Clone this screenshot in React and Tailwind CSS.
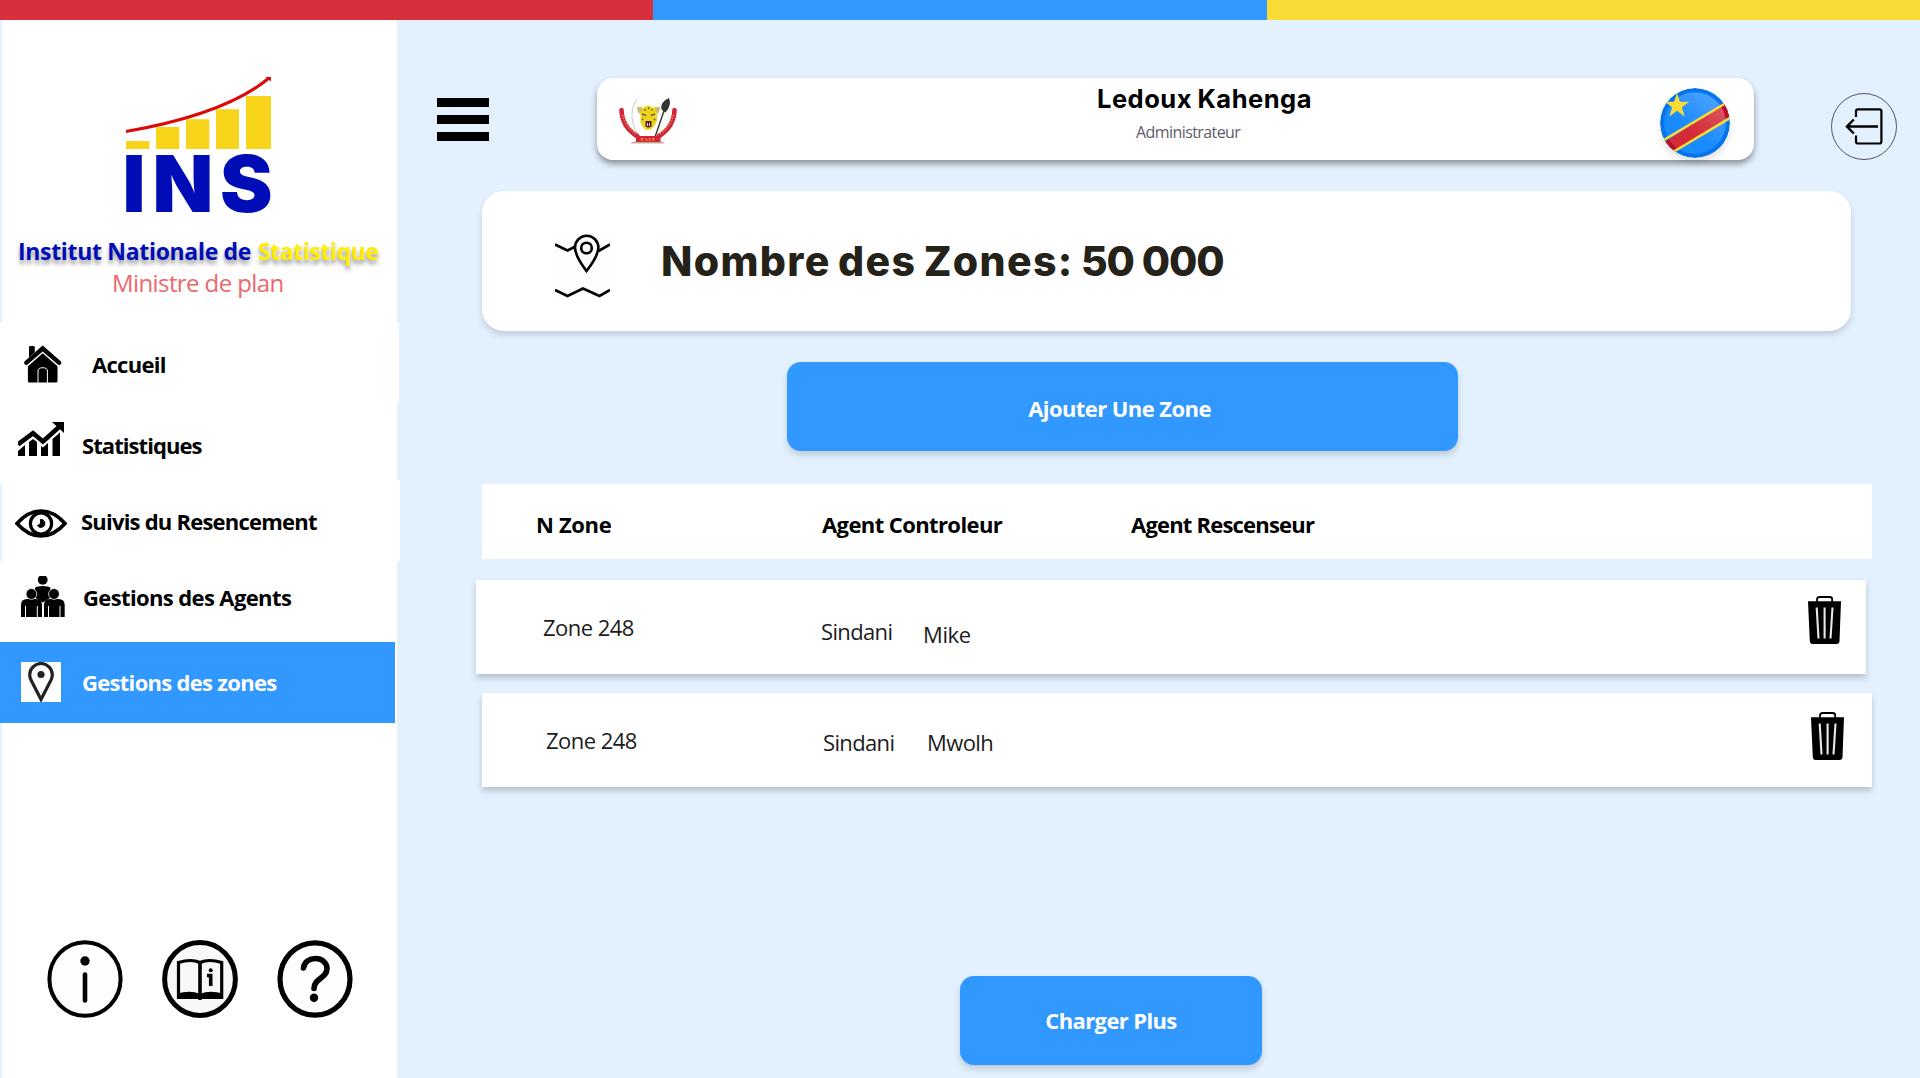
import React from "react";

const HomeIcon = () => (
  <svg viewBox="0 0 38 38" className="h-[38px] w-[38px]">
    <path d="M5 2.2Q5 1 6.200 1H9.600Q10.800 1 10.800 2.200V9.500L5 14.500Z" fill="#000" />
    <path d="M3.900 17.300V36Q3.900 37.500 5.400 37.500H32Q33.500 37.500 33.500 36V17.300L18.700 4.500Z" fill="#000" />
    <path d="M2 19L18.700 4.300L35.500 19" fill="none" stroke="#fff" strokeWidth="6" />
    <path d="M2.400 17.700L18.700 3.500L35 17.700" fill="none" stroke="#000" strokeWidth="4.400" strokeLinecap="round" />
    <path d="M14 38V26Q14 22.700 18.700 22.700Q23.400 22.700 23.400 26V38" fill="none" stroke="#fff" strokeWidth="1" />
  </svg>
);

const ChartIcon = () => (
  <svg viewBox="0 0 46 34" className="h-[34px] w-[46px]">
    <path d="M0 29L7 23V34H0ZM11 20L15 17L19 20V34H11ZM23 24L25 25.500L30 21V34H23ZM34.500 17L42 10.500V34H34.500Z" fill="#000" />
    <path d="M0 22.500L15 11.200L25 19.500L41 5" fill="none" stroke="#000" strokeWidth="4.600" />
    <path d="M34 0H46V11Z" fill="#000" />
  </svg>
);

const EyeIcon = () => (
  <svg viewBox="0 0 52 29" className="h-[29px] w-[52px]" fill="none" stroke="#000">
    <path d="M2 14.500Q13 2 26 2T50 14.500Q39 27 26 27T2 14.500Z" strokeWidth="3.600" />
    <circle cx="26" cy="14.500" r="10.600" strokeWidth="3.200" />
    <path d="M25.300 10.500A4 4 0 1 1 22.500 16.500Q26.500 15.500 25.300 10.500Z" fill="#000" strokeWidth="1" />
  </svg>
);

const AgentsIcon = () => (
  <svg viewBox="0 0 44 41" className="h-[41px] w-[44px]">
    <circle cx="21.700" cy="3.800" r="4.900" />
    <path d="M14 11.800Q16 10 21.700 10T29.500 11.800L29 22L21.700 26.500L14.500 22Z" fill="#000" />
    <path d="M0 41V29Q0 23 6 23H15Q21 23 21 29V41ZM23 41V29Q23 23 29 23H37.500Q43.700 23 43.700 29V41Z" fill="#000" />
    <circle cx="10.400" cy="18" r="5.400" stroke="#fff" strokeWidth="0.700" />
    <circle cx="33" cy="18" r="5.400" stroke="#fff" strokeWidth="0.700" />
    <path d="M4.500 30V41M16.300 30V41M27.500 30V41M39 30V41" stroke="#fff" strokeWidth="1" />
  </svg>
);

const PinIcon = () => (
  <svg viewBox="0 0 40 40" className="h-10 w-10 bg-white">
    <path d="M20 37.500L10 18Q8.700 15.500 8.700 12.800A11.300 11.300 0 0 1 31.300 12.800Q31.300 15.500 30 18Z" fill="none" stroke="#222" strokeWidth="3.200" />
    <circle cx="20" cy="12.500" r="3.600" fill="#222" />
  </svg>
);

const MapIcon = () => (
  <svg viewBox="0 0 55 64" className="h-16 w-[55px] bg-[#fdfdfd]" fill="none" stroke="#000" strokeWidth="2.600">
    <path d="M0 10.500L12.500 16.500L19.500 13M43.500 17L55 10.500M0 56L12.500 62L28 54.500L44.500 62L55 56" />
    <path d="M31.500 37C27 31 20 22 20 13.500A11.700 11.700 0 0 1 43.400 13.500C43.400 22 36 31 31.500 37Z" />
    <circle cx="31.500" cy="14" r="5.300" />
  </svg>
);

const TrashIcon = () => (
  <svg viewBox="0 0 33 48" className="h-12 w-[33px]">
    <path d="M9 6V3.500Q9 1 11.500 1H21.700Q24.200 1 24.200 3.500V6" fill="none" stroke="#000" strokeWidth="1.800" />
    <path d="M0 5.300H33L31.500 45Q31.300 48 28.500 48H4.500Q2 48 1.800 45Z" fill="#000" />
    <path d="M8.700 11.500L10.500 42.500M16.600 11.500V42.500M24.500 11.500L22.500 42.500" stroke="#e8e8e8" strokeWidth="2.100" />
  </svg>
);

const InfoIcon = () => (
  <svg viewBox="0 0 76 78" className="h-[78px] w-[76px]">
    <ellipse cx="38" cy="39" rx="35.600" ry="36.800" fill="#fdfdfd" stroke="#000" strokeWidth="4" />
    <circle cx="38" cy="21" r="4.700" />
    <path d="M38 34.500V60.500" stroke="#000" strokeWidth="4.600" strokeLinecap="round" />
  </svg>
);

const BookIcon = () => (
  <svg viewBox="0 0 76 78" className="h-[78px] w-[76px]">
    <ellipse cx="38" cy="39" rx="35.400" ry="36.500" fill="#f8f8f8" stroke="#000" strokeWidth="5" />
    <path d="M16.500 22.500Q29 18.500 38 22.500Q47 18.500 59.700 22.500V57.500H16.500Z" fill="#f8f8f8" stroke="#000" strokeWidth="3.200" />
    <path d="M15 53.500Q29 50 38 54Q47 50 61 53.500V58.500H41Q38 61.500 35 58.500H15Z" />
    <path d="M38 22V56" stroke="#000" strokeWidth="3.600" />
    <circle cx="48.700" cy="30.300" r="2" />
    <path d="M45 35.500H48.700V46" fill="none" stroke="#000" strokeWidth="3.600" />
  </svg>
);

const HelpIcon = () => (
  <svg viewBox="0 0 76 78" className="h-[78px] w-[76px]">
    <ellipse cx="38" cy="39" rx="35" ry="36.200" fill="#fdfdfd" stroke="#000" strokeWidth="5.200" />
    <path d="M26.500 28C28 15 49.500 15.500 50 28.500C50 38.500 37 38 37 48.500" fill="none" stroke="#000" strokeWidth="5.600" strokeLinecap="round" />
    <circle cx="37" cy="57.700" r="4.200" />
  </svg>
);

const LogoutIcon = () => (
  <svg viewBox="0 0 66 67" className="h-[67px] w-[66px]" fill="none" stroke="#000">
    <ellipse cx="33" cy="33.500" rx="32.500" ry="33" strokeWidth="1" stroke="#555" />
    <path d="M25 24V18Q25 16.300 27 16.300H48.500Q50.400 16.300 50.400 18.300V48.500Q50.400 50.500 48.500 50.500H27Q25 50.500 25 48.500V42.500" strokeWidth="2.200" />
    <path d="M47 33.500H16.500M22.800 26.500L16 33.500L22.800 40.500" strokeWidth="2.500" />
  </svg>
);

const InsLogo = () => (
  <svg viewBox="0 0 145 136" className="h-[136px] w-[145px] overflow-visible">
    <path d="M0 64H23.300V72H0ZM30 50H53.300V72H30ZM60 42.300H83.300V72H60ZM90 32.300H113V72H90ZM120 19H145V72H120Z" fill="#f8d51a" />
    <path d="M0 54.500Q100 37 143 1" fill="none" stroke="#dc0808" strokeWidth="3" />
    <path d="M139.500 0H145V4.500Z" fill="#dc0808" />
    <g fill="#000cb6" fontSize="79" fontWeight="900" fontFamily="Inter, sans-serif">
      <text x="-3.500" y="135">I</text>
      <text x="26.500" y="135">N</text>
      <text x="94" y="135">S</text>
    </g>
  </svg>
);

const Emblem = () => (
  <svg viewBox="0 0 58 47" className="h-[47px] w-[58px]">
    <path d="M18 2C11 12 11 26 20 39" fill="none" stroke="#bbb" strokeWidth="0.800" />
    <path d="M11 46.500Q14 43.500 20 44H38Q44 44 46 46.500Z" fill="#c9a99a" />
    <path d="M36 40L46 11" stroke="#333" strokeWidth="1.400" />
    <path d="M50 1Q53 8 46.500 15.500Q40 12 43 7Q45 3 50 1Z" fill="#333" />
    <path d="M18 10Q22 9 24 11Q29 6 34 11Q37 9 41 10Q41 15 38 17V24Q34 33 29 33T21.500 25V17Q18 15 18 10Z" fill="#ecd31c" />
    <path d="M18 10L23 12L20 17ZM41 10L36 12L39 17Z" fill="#b9b69a" />
    <path d="M23 17L27 18.500M36 17L32 18.500M26 12V13.500M29.500 10.500V12M33 12V13.500M23 22L24 23M36 22L35 23" stroke="#333" strokeWidth="1.100" />
    <path d="M26.500 24H32.500V29.500Q29.500 31.500 26.500 29.500Z" fill="#5b1830" />
    <path d="M28.500 26V29M30.500 26V29" stroke="#fff" strokeWidth="0.800" />
    <path d="M2.500 13C3 26 9 33 18.500 39.500M55.500 13C55 26 49 33 39.500 39.500" fill="none" stroke="#d3243e" strokeWidth="4.600" strokeLinecap="round" />
    <path d="M3.500 18C6 27 10 32 17 37M54.500 18C52 27 48 32 41 37" fill="none" stroke="#e8973a" strokeWidth="1.600" strokeDasharray="1.200 1.600" />
    <path d="M17 39H41.500V45H17Z" fill="#d3243e" />
    <text x="29.300" y="43.800" textAnchor="middle" fontSize="4.800" fontWeight="700" fontFamily="Liberation Serif, serif" letterSpacing="0.900" fill="#f0b030">PAIX</text>
  </svg>
);

const Flag = () => (
  <svg viewBox="0 0 70 70" className="h-[70px] w-[70px] rounded-full shadow-[0_4px_6px_rgba(0,0,0,0.12)]">
    <defs>
      <clipPath id="disc"><circle cx="35" cy="35" r="35" /></clipPath>
      <clipPath id="inner"><circle cx="35" cy="35" r="30.800" /></clipPath>
      <linearGradient id="shine" x1="0.800" y1="0.100" x2="0.400" y2="0.600">
        <stop offset="0" stopColor="#fff" stopOpacity="0.200" />
        <stop offset="1" stopColor="#fff" stopOpacity="0" />
      </linearGradient>
    </defs>
    <g clipPath="url(#disc)">
      <path d="M0 0H70V70H0Z" fill="#0475ea" />
      <path d="M0 57L70 12V28L10 67Z" fill="#c00d20" />
      <g clipPath="url(#inner)">
        <path d="M0 0H70V70H0Z" fill="#1a8aff" />
        <path d="M0 57L70 12V28L10 67Z" fill="#d52b39" />
        <circle cx="35" cy="35" r="31" fill="url(#shine)" />
      </g>
      <path d="M3 52.500L66 15M13 64L71 29.500" stroke="#fbdc34" strokeWidth="2.600" />
      <path d="M17 5L19.900 13.800H29.200L21.800 19.300L24.700 28.500L17 22.800L9.300 28.500L12.200 19.300L4.800 13.800H14.100Z" fill="#fbdc34" />
    </g>
  </svg>
);

const Bold = ({ className = "", children }) => (
  <span className={`whitespace-nowrap text-[22px] leading-[30px] font-bold ${className}`}>{children}</span>
);

const Cell = ({ className = "", children }) => (
  <span className={`shrink-0 whitespace-nowrap text-[22px] leading-[30px] text-[#1c1c1c] ${className}`}>{children}</span>
);

const actionClass =
  "flex h-[89px] items-start justify-center rounded-[14px] bg-[#3198ff] text-white shadow-[0_4px_6px_rgba(0,0,0,0.16)]";

function Sidebar() {
  return (
    <aside className="flex w-[400px] shrink-0 flex-col">
      <div className="ml-[2px] flex h-[303px] w-[395px] flex-col bg-white pt-[57px]">
        <div className="pl-[124px]"><InsLogo /></div>
        <div className="mt-[22px] flex gap-[7px] pl-4 text-[23px] leading-[32px] font-bold whitespace-nowrap [text-shadow:0_4px_4px_rgba(0,0,0,0.4)]">
          <span className="tracking-[-0.32px] text-[#000cb6]">Institut Nationale de</span>
          <span className="tracking-[-0.42px] text-[#ffee00]">Statistique</span>
        </div>
        <p className="pl-[110px] text-2xl leading-[32px] tracking-[-0.59px] text-[#ec686c]">Ministre de plan</p>
      </div>
      <nav className="flex flex-col">
        <a className="flex h-[81px] w-[399px] items-start bg-white pl-[24px]">
          <span className="mt-[22px]"><HomeIcon /></span>
          <Bold className="mt-[26px] ml-[30px] tracking-[-0.7px]">Accueil</Bold>
        </a>
        <a className="flex h-[81px] w-[397px] items-start bg-white pl-[18px]">
          <span className="mt-[18px]"><ChartIcon /></span>
          <Bold className="mt-[26px] ml-[18px] tracking-[-0.93px]">Statistiques</Bold>
        </a>
        <a className="mt-[-5px] ml-[2px] flex h-[81px] w-[398px] items-start bg-white pl-[13px]">
          <span className="mt-[29px]"><EyeIcon /></span>
          <Bold className="mt-[26px] ml-[14px] tracking-[-0.78px]">Suivis du Resencement</Bold>
        </a>
        <a className="flex h-[81px] w-[397px] items-start bg-white pl-[21px]">
          <span className="mt-[15px]"><AgentsIcon /></span>
          <Bold className="mt-[21px] ml-[18px] tracking-[-0.62px]">Gestions des Agents</Bold>
        </a>
        <div className="w-[397px] bg-white">
          <a className="flex h-[81px] w-[395px] items-start bg-[#3198ff] pl-[21px] text-white">
            <span className="mt-5"><PinIcon /></span>
            <Bold className="mt-[25px] ml-[21px] tracking-[-0.7px]">Gestions des zones</Bold>
          </a>
        </div>
      </nav>
      <div className="ml-[2px] flex w-[395px] grow items-start gap-[39px] bg-white pt-[217px] pl-[45px]">
        <InfoIcon />
        <BookIcon />
        <HelpIcon />
      </div>
    </aside>
  );
}

function Header() {
  return (
    <header className="flex items-start pt-[58px] pl-[37px]">
      <button className="mt-5 flex w-[52px] flex-col gap-2">
        <span className="h-[9px] bg-black" />
        <span className="h-[9px] bg-black" />
        <span className="h-[9px] bg-black" />
      </button>
      <div className="ml-[108px] flex h-[82px] w-[1157px] items-start rounded-2xl bg-white pl-[22px] shadow-[0_4px_6px_rgba(0,0,0,0.4)]">
        <span className="mt-[19px]"><Emblem /></span>
        <div className="ml-[420px] flex w-[563px] flex-col pt-[6px]">
          <span className="font-[Inter,sans-serif] text-[25.5px] leading-[30px] font-bold tracking-[0.5px] [word-spacing:-1px] whitespace-nowrap">Ledoux Kahenga</span>
          <span className="mt-[7px] ml-[39px] text-base leading-[22px] tracking-[-0.58px] text-[#5f5a6b]">Administrateur</span>
        </div>
        <span className="mt-[9.5px]"><Flag /></span>
      </div>
      <button className="mt-[15px] ml-[77px]"><LogoutIcon /></button>
    </header>
  );
}

const rows = [
  {
    zone: "Zone 248", first: "Sindani", last: "Mike",
    row: "mt-[21px] ml-[76px] pl-[67px]", zoneCell: "mt-8 w-[278px]",
    firstCell: "mt-9 w-[102px]", lastCell: "mt-[39px] w-[885px] tracking-[-0.4px]", trash: "mt-4",
  },
  {
    zone: "Zone 248", first: "Sindani", last: "Mwolh",
    row: "mt-[19px] ml-[82px] pl-[64px]", zoneCell: "mt-8 w-[277px]",
    firstCell: "mt-[34px] w-[104px]", lastCell: "mt-[34px] w-[884px] tracking-[-0.6px]", trash: "mt-[19px]",
  },
];

export default function App() {
  return (
    <div className="flex h-[1078px] w-[1920px] flex-col overflow-hidden bg-[#e3f1ff] font-[Open_Sans,sans-serif] text-black">
      <div className="flex h-5 shrink-0">
        <div className="w-[653px] bg-[#d72f3c]" />
        <div className="w-[614px] bg-[#3198ff]" />
        <div className="grow bg-[#fadc36]" />
      </div>
      <div className="flex grow">
        <Sidebar />
        <main className="flex grow flex-col">
          <Header />
          <section className="mt-[31px] ml-[82px] flex h-[140px] w-[1369px] items-start rounded-[22px] bg-white pl-[73px] shadow-[0_4px_6px_rgba(0,0,0,0.15)]">
            <span className="mt-[43px]"><MapIcon /></span>
            <h1 className="mt-[45px] ml-[51px] font-[Inter,sans-serif] text-[41px] leading-[50px] font-extrabold tracking-[1.35px] [word-spacing:-3px] whitespace-nowrap text-[#25221a]">
              Nombre des Zones: <span className="tracking-[-1.1px] [word-spacing:0px]">50 000</span>
            </h1>
          </section>
          <button className={`mt-[31px] ml-[387px] w-[671px] pt-[31px] pr-[6px] ${actionClass}`}>
            <Bold className="tracking-[-0.57px]">Ajouter Une Zone</Bold>
          </button>
          <div className="mt-[33px] ml-[82px] flex h-[75px] w-[1390px] bg-white pt-[25px] pl-[54px]">
            <Bold className="w-[286px] tracking-[-0.35px]">N Zone</Bold>
            <Bold className="w-[309px] tracking-[-0.6px]">Agent Controleur</Bold>
            <Bold className="tracking-[-0.8px]">Agent Rescenseur</Bold>
          </div>
          {rows.map((r) => (
            <div key={r.last} className={`flex h-[94px] w-[1390px] items-start bg-white shadow-[0_4px_6px_rgba(0,0,0,0.2)] ${r.row}`}>
              <Cell className={`tracking-[-0.53px] ${r.zoneCell}`}>{r.zone}</Cell>
              <Cell className={`tracking-[-0.65px] ${r.firstCell}`}>{r.first}</Cell>
              <Cell className={r.lastCell}>{r.last}</Cell>
              <button className={r.trash}><TrashIcon /></button>
            </div>
          ))}
          <button className={`mt-[189px] ml-[560px] w-[302px] pt-[29px] ${actionClass}`}>
            <Bold className="tracking-[-0.63px]">Charger Plus</Bold>
          </button>
        </main>
      </div>
    </div>
  );
}
